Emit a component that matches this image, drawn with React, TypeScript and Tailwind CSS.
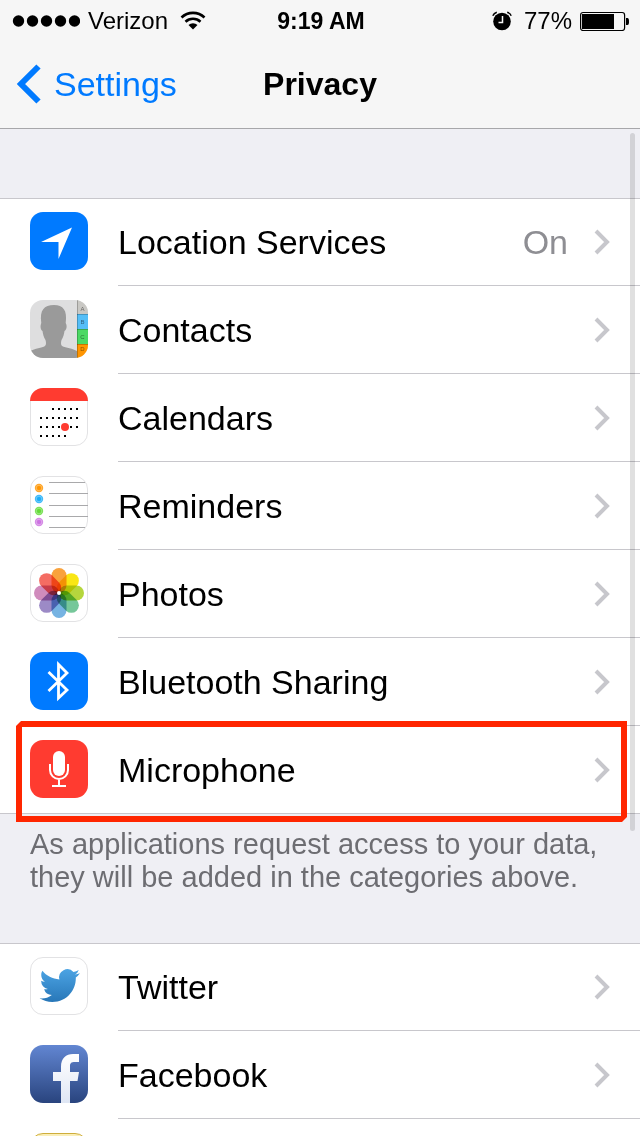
import React from "react";

const tile = "block size-[58px] shrink-0";

function Squircle({ fill, children }: { fill: string; children?: React.ReactNode }) {
  return (
    <svg viewBox="0 0 58 58" className={tile} aria-hidden="true">
      <rect width="58" height="58" rx="13" fill={fill} />
      {children}
    </svg>
  );
}

function Outlined({ children }: { children?: React.ReactNode }) {
  return (
    <svg viewBox="0 0 58 58" className={tile} aria-hidden="true">
      <rect x=".5" y=".5" width="57" height="57" rx="12.5" fill="#fff" stroke="#e2e2e4" />
      {children}
    </svg>
  );
}

const LocationIcon = () => (
  <Squircle fill="#007aff">
    <path d="M42 15.5 28.5 47V30H11Z" fill="#fff" />
  </Squircle>
);

const ContactsIcon = () => (
  <svg viewBox="0 0 58 58" className={tile} aria-hidden="true">
    <defs>
      <clipPath id="contacts-tile"><rect width="58" height="58" rx="13" /></clipPath>
    </defs>
    <g clipPath="url(#contacts-tile)">
      <rect width="58" height="58" fill="#dededf" />
      <path d="M0 58V51C5 48.500 12 48 15 46C16.500 44.500 16 42 15.500 40C13.500 37 13 34 12.500 31C10.500 30 10 26 11.300 23C9.500 10 14 5 24 5C33 5 37.500 10 35.700 23C37.500 26 36.500 30 34.500 31C34 34 33.500 37 31.500 40C31 42 30.500 44.500 32 46C36 48 43 48.500 47 51V58Z" fill="#9a9a9a" />
      <rect x="47" width="11" height="14" fill="#c9c8c4" />
      <rect x="47" y="14" width="11" height="15" fill="#55bef7" />
      <rect x="47" y="29" width="11" height="15" fill="#4cd964" />
      <rect x="47" y="44" width="11" height="14" fill="#ff9500" />
      <path d="M47 14.500H58M47 29.500H58M47 44.500H58M47.500 0V58" stroke="#000" strokeOpacity=".22" />
      <g fontFamily="Liberation Sans, sans-serif" fontSize="6" textAnchor="middle" fill="#000" fillOpacity=".5">
        <text x="52.500" y="11">A</text>
        <text x="52.500" y="24">B</text>
        <text x="52.500" y="39">C</text>
        <text x="52.500" y="51">D</text>
      </g>
    </g>
  </svg>
);

const calendarWeeks = [
  { y: 20, from: 2, to: 6 },
  { y: 29, from: 0, to: 6 },
  { y: 38, from: 0, to: 6 },
  { y: 47, from: 0, to: 4 },
];

const CalendarIcon = () => (
  <Outlined>
    <path d="M0 13A13 13 0 0 1 13 0H45A13 13 0 0 1 58 13Z" fill="#ff3b30" />
    {calendarWeeks.map((week) =>
      Array.from({ length: week.to - week.from + 1 }, (_, i) => (
        <rect key={`${week.y}-${i}`} x={10 + (week.from + i) * 6} y={week.y} width="2" height="2" fill="#000" />
      )),
    )}
    <circle cx="35" cy="39" r="4" fill="#ff3b30" />
  </Outlined>
);

const RemindersIcon = () => (
  <Outlined>
    {[
      [12, "#ff9500"],
      [23, "#1badf8"],
      [35, "#63da38"],
      [46, "#cc73e1"],
    ].map(([y, color]) => (
      <g key={y} fill={color as string}>
        <circle cx="9" cy={y} r="4.200" fillOpacity=".85" />
        <circle cx="9" cy={y} r="2.800" fill="none" stroke="#fff" strokeWidth=".6" strokeOpacity=".4" />
        <circle cx="9" cy={y} r="2" />
      </g>
    ))}
    <path d="M19 6.500H55M19 17.500H58M19 29.500H58M19 40.500H58M19 51.500H55" stroke="#a9a9ab" fill="none" />
  </Outlined>
);

const petals: [number, string][] = [
  [0, "#f9a23c"],
  [45, "#f9e615"],
  [90, "#b5d63d"],
  [135, "#76c79a"],
  [180, "#76b3e2"],
  [225, "#9c8ac6"],
  [270, "#d08bbc"],
  [315, "#f46c63"],
];

const PhotosIcon = () => (
  <Outlined>
    <g className="isolate">
      {petals.map(([angle, color]) => (
        <rect
          key={angle}
          x="21.500"
          y="4"
          width="15"
          height="25"
          rx="7.500"
          fill={color}
          transform={`rotate(${angle} 29 29)`}
          className="mix-blend-multiply"
        />
      ))}
    </g>
    <circle cx="29" cy="29" r="2" fill="#fff" />
  </Outlined>
);

const BluetoothIcon = () => (
  <Squircle fill="#007aff">
    <path d="M18.500 20 37 38 28.500 46V12.500L37 21 18.500 39" fill="none" stroke="#fff" strokeWidth="2.800" />
  </Squircle>
);

const MicrophoneIcon = () => (
  <Squircle fill="#ff3b30">
    <rect x="23" y="11" width="12" height="25" rx="6" fill="#fff" />
    <path d="M20 24V30A9 9 0 0 0 38 30V24M29 39V46M22 46H36" fill="none" stroke="#fff" strokeWidth="2" />
  </Squircle>
);

const TwitterIcon = () => (
  <Outlined>
    <defs>
      <linearGradient id="bird" x1="0" y1="0" x2="0" y2="1">
        <stop stopColor="#4ba3e3" />
        <stop offset="1" stopColor="#2877b8" />
      </linearGradient>
    </defs>
    <path
      transform="translate(9.600 8.500) scale(1.680)"
      fill="url(#bird)"
      d="M23.953 4.570a10 10 0 01-2.825.775 4.958 4.958 0 002.163-2.723c-.951.555-2.005.959-3.127 1.184a4.920 4.920 0 00-8.384 4.482C7.690 8.095 4.067 6.130 1.640 3.162a4.822 4.822 0 00-.666 2.475c0 1.710.870 3.213 2.188 4.096a4.904 4.904 0 01-2.228-.616v.060a4.923 4.923 0 003.946 4.827 4.996 4.996 0 01-2.212.085 4.936 4.936 0 004.604 3.417 9.867 9.867 0 01-6.102 2.105c-.390 0-.779-.023-1.170-.067a13.995 13.995 0 007.557 2.209c9.053 0 13.998-7.496 13.998-13.985 0-.210 0-.420-.015-.630A9.935 9.935 0 0024 4.590z"
    />
  </Outlined>
);

const FacebookIcon = () => (
  <svg viewBox="0 0 58 58" className={tile} aria-hidden="true">
    <defs>
      <linearGradient id="fb-tile" x1="0" y1="0" x2="0" y2="1">
        <stop stopColor="#6286d2" />
        <stop offset="1" stopColor="#29447e" />
      </linearGradient>
      <linearGradient id="fb-mark" x1="0" y1="0" x2="0" y2="1">
        <stop stopColor="#fff" />
        <stop offset="1" stopColor="#dfe6f4" />
      </linearGradient>
    </defs>
    <rect width="58" height="58" rx="13" fill="url(#fb-tile)" />
    <path d="M31 58V36H23V27H31V22C31 13 36 9 43 9H49V17H45C41 17 40 18.500 40 21V27H49L47.500 36H40V58Z" fill="url(#fb-mark)" />
  </svg>
);

const NotesIcon = () => (
  <svg viewBox="0 0 58 58" className={tile} aria-hidden="true">
    <rect x=".5" y=".5" width="57" height="57" rx="12.500" fill="#faeeb8" stroke="#cfae3c" />
  </svg>
);

const Chevron = () => (
  <svg viewBox="0 0 16 26" className="h-[26px] w-4 shrink-0" aria-hidden="true">
    <path d="M2 2 13 13 2 24" fill="none" stroke="#c7c7cc" strokeWidth="4" />
  </svg>
);

type RowProps = {
  icon: React.ReactNode;
  label: string;
  value?: string;
  first?: boolean;
  last?: boolean;
  marked?: boolean;
};

function Row({ icon, label, value, first, last, marked }: RowProps) {
  return (
    <li
      className={`relative bg-white ${first ? "border-t border-[#c8c7cc]" : ""} ${last ? "border-b border-[#c8c7cc]" : ""}`}
    >
      <a href="#" className={`flex pl-[30px] ${first || last ? "h-[87px]" : "h-[88px]"}`}>
        <span className={first ? "pt-[13px]" : "pt-3.5"}>{icon}</span>
        <span
          className={`ml-[30px] flex flex-1 items-center pr-[30px] ${last ? "" : "border-b border-[#c8c7cc]"}`}
        >
          <span className="flex-1">{label}</span>
          {value && <span className="mr-[26px] text-[#8e8e93]">{value}</span>}
          <Chevron />
        </span>
      </a>
      {marked && (
        <span className="pointer-events-none absolute -top-[5px] right-[13px] -bottom-[9px] left-4 border-[6px] border-[#ff2600] [clip-path:polygon(5px_0,100%_0,100%_calc(100%-5px),calc(100%-5px)_100%,0_100%,0_5px)]" />
      )}
    </li>
  );
}

function StatusBar() {
  return (
    <div className="grid h-10 grid-cols-[1fr_auto_1fr] items-center pt-0.5 pr-2.5 pl-3 text-[24px] leading-none">
      <div className="flex items-center">
        <svg viewBox="0 0 68 12" className="h-3 w-[68px]" aria-hidden="true">
          {[6, 20, 34, 48, 62].map((x) => (
            <circle key={x} cx={x + 0.5} cy="6" r="5.700" />
          ))}
        </svg>
        <span className="ml-2">Verizon</span>
        <svg viewBox="0 0 26 20" className="ml-3 h-5 w-[26px]" aria-hidden="true">
          <path d="M1.500 6.500A16.500 16.500 0 0 1 24.500 6.500M5.500 10.700A11 11 0 0 1 20.500 10.700" fill="none" stroke="#000" strokeWidth="2.600" />
          <path d="M8.500 14A6.500 6.500 0 0 1 17.500 14L13 18.500Z" />
        </svg>
      </div>
      <span className="text-[23px] font-bold">9:19 AM</span>
      <div className="flex items-center justify-end">
        <svg viewBox="0 0 20 20" className="size-5" aria-hidden="true">
          <circle cx="10" cy="10.500" r="8.800" />
          <path d="M.8 4.800A6 6 0 0 1 4.800 1.200M19.200 4.800A6 6 0 0 0 15.200 1.200" fill="none" stroke="#000" strokeWidth="1.500" />
          <path d="M10.500 5V11.500H6.500" fill="none" stroke="#f6f6f6" strokeWidth="1.500" />
        </svg>
        <span className="ml-3">77%</span>
        <svg viewBox="0 0 50 20" className="ml-2 h-5 w-[50px]" aria-hidden="true">
          <rect x=".6" y="1.500" width="44" height="18" rx="2.500" fill="none" stroke="#000" strokeWidth="1.200" />
          <rect x="2" y="3" width="32" height="15" />
          <path d="M46 7H47.500Q49 7 49 10.500T47.500 14H46Z" />
        </svg>
      </div>
    </div>
  );
}

export default function App() {
  return (
    <div className="relative flex h-dvh flex-col bg-[#efeff4] font-['Liberation_Sans',Arial,sans-serif] text-[34px] leading-10 text-black">
      <header className="shrink-0 border-b border-[#a7a7aa] bg-[#f6f6f6]">
        <StatusBar />
        <nav className="grid h-[88px] grid-cols-[1fr_auto_1fr] items-center px-4">
          <a href="#" className="flex items-center text-[#007aff]">
            <svg viewBox="0 0 26 40" className="h-10 w-[26px]" aria-hidden="true">
              <path d="M22.500 2.500 5 20 22.500 37.500" fill="none" stroke="currentColor" strokeWidth="6" />
            </svg>
            <span className="ml-3">Settings</span>
          </a>
          <h1 className="text-[32px] font-bold">Privacy</h1>
        </nav>
      </header>

      <main className="flex-1 overflow-y-auto pt-[69px] [scrollbar-width:none]">
        <ul>
          <Row icon={<LocationIcon />} label="Location Services" value="On" first />
          <Row icon={<ContactsIcon />} label="Contacts" />
          <Row icon={<CalendarIcon />} label="Calendars" />
          <Row icon={<RemindersIcon />} label="Reminders" />
          <Row icon={<PhotosIcon />} label="Photos" />
          <Row icon={<BluetoothIcon />} label="Bluetooth Sharing" />
          <Row icon={<MicrophoneIcon />} label="Microphone" last marked />
        </ul>
        <p className="px-[30px] pt-3.5 pb-[49px] text-[29px] leading-[33px] text-[#6d6d72]">
          As applications request access to your data, they will be added in the categories above.
        </p>
        <ul>
          <Row icon={<TwitterIcon />} label="Twitter" first />
          <Row icon={<FacebookIcon />} label="Facebook" />
          <Row icon={<NotesIcon />} label="" last />
        </ul>
      </main>

      <div className="pointer-events-none absolute top-[133px] right-[5px] h-[698px] w-[5px] rounded-full bg-black/12" />
    </div>
  );
}
